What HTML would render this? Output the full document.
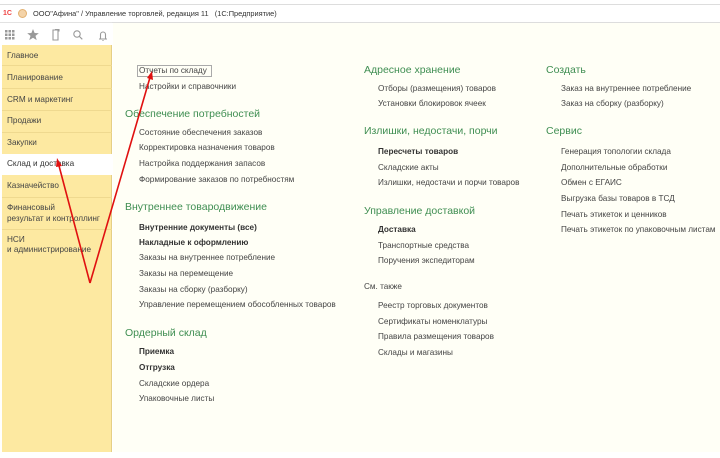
<!DOCTYPE html>
<html><head><meta charset="utf-8"><style>
*{margin:0;padding:0;box-sizing:border-box}
body{width:720px;height:458px;background:#fff;font-family:"Liberation Sans","Noto Sans CJK SC",sans-serif;position:relative;overflow:hidden;color:#444}
.a{position:absolute;white-space:nowrap;font-size:8.2px;line-height:10px}
.h{position:absolute;white-space:nowrap;font-size:10.5px;line-height:12px;color:#3f8e52}
.b{font-weight:bold;color:#333}
.s{position:absolute;white-space:nowrap;font-size:8.2px;line-height:10px;color:#444}
</style></head><body>
<div style="position:absolute;left:0;top:4px;width:720px;height:1px;background:#ddd"></div>
<div style="position:absolute;left:0;top:22px;width:720px;height:1px;background:#e2e2e2"></div>
<div style="position:absolute;left:3px;top:10px;font-size:7px;font-weight:bold;color:#e44">1С</div>
<div style="position:absolute;left:18px;top:9px;width:9px;height:9px;border-radius:50%;background:#f4d3a8;border:1px solid #e2b070"></div>
<div class="a" style="left:33px;top:9px;font-size:7.4px;color:#333">ООО"Афина" / Управление торговлей, редакция 11 &nbsp; (1С:Предприятие)</div>
<!-- toolbar icons -->
<svg style="position:absolute;left:0;top:26px" width="112" height="18">
<g fill="#999"><rect x="5" y="4" width="2.5" height="2.5"/><rect x="8.5" y="4" width="2.5" height="2.5"/><rect x="12" y="4" width="2.5" height="2.5"/><rect x="5" y="7.5" width="2.5" height="2.5"/><rect x="8.5" y="7.5" width="2.5" height="2.5"/><rect x="12" y="7.5" width="2.5" height="2.5"/><rect x="5" y="11" width="2.5" height="2.5"/><rect x="8.5" y="11" width="2.5" height="2.5"/><rect x="12" y="11" width="2.5" height="2.5"/>
<path d="M33 3l1.6 4 4.2.2-3.3 2.7 1.2 4.2-3.7-2.4-3.7 2.4 1.2-4.2-3.3-2.7 4.2-.2z"/></g>
<g fill="none" stroke="#999" stroke-width="1.1"><path d="M53 4h5v10h-5z M55 3.5h4v2"/><circle cx="77" cy="8" r="3.2"/><path d="M79.3 10.3l3 3"/><path d="M99 13h8 M100.5 12.5v-4a2.5 2.5 0 0 1 5 0v4 M103 14v1"/></g>
</svg>
<div style="position:absolute;left:112px;top:22px;width:608px;height:1px;background:#ddd"></div>
<!-- sidebar -->
<div style="position:absolute;left:2px;top:45px;width:110px;height:407px;background:#fde9a1;border-right:1px solid #e5cf86"></div>
<div style="position:absolute;left:2px;top:154px;width:110px;height:21px;background:#fff"></div>
<div style="position:absolute;left:2px;top:65px;width:110px;height:1px;background:#efd98f"></div>
<div style="position:absolute;left:2px;top:88px;width:110px;height:1px;background:#efd98f"></div>
<div style="position:absolute;left:2px;top:110px;width:110px;height:1px;background:#efd98f"></div>
<div style="position:absolute;left:2px;top:132px;width:110px;height:1px;background:#efd98f"></div>
<div style="position:absolute;left:2px;top:197px;width:110px;height:1px;background:#efd98f"></div>
<div style="position:absolute;left:2px;top:229px;width:110px;height:1px;background:#efd98f"></div>
<div class="s" style="left:7px;top:51px">Главное</div>
<div class="s" style="left:7px;top:73px">Планирование</div>
<div class="s" style="left:7px;top:95px">CRM и маркетинг</div>
<div class="s" style="left:7px;top:116px">Продажи</div>
<div class="s" style="left:7px;top:138px">Закупки</div>
<div class="s" style="left:7px;top:159px;color:#333">Склад и доставка</div>
<div class="s" style="left:7px;top:181px">Казначейство</div>
<div class="s" style="left:7px;top:203px">Финансовый</div>
<div class="s" style="left:7px;top:214px">результат и контроллинг</div>
<div class="s" style="left:7px;top:235px">НСИ</div>
<div class="s" style="left:7px;top:245px">и администрирование</div>
<!-- main -->
<div style="position:absolute;left:113px;top:23px;width:607px;height:429px;background:#fffff6"></div>
<div style="position:absolute;left:137px;top:65px;width:75px;height:12px;border:1px solid #aaa"></div>
<div class="a" style="left:139px;top:66px">Отчеты по складу</div>
<div class="a" style="left:139px;top:82px">Настройки и справочники</div>
<div class="h" style="left:125px;top:108px">Обеспечение потребностей</div>
<div class="a" style="left:139px;top:128px">Состояние обеспечения заказов</div>
<div class="a" style="left:139px;top:143px">Корректировка назначения товаров</div>
<div class="a" style="left:139px;top:159px">Настройка поддержания запасов</div>
<div class="a" style="left:139px;top:175px">Формирование заказов по потребностям</div>
<div class="h" style="left:125px;top:201px">Внутреннее товародвижение</div>
<div class="a b" style="left:139px;top:223px">Внутренние документы (все)</div>
<div class="a b" style="left:139px;top:238px">Накладные к оформлению</div>
<div class="a" style="left:139px;top:253px">Заказы на внутреннее потребление</div>
<div class="a" style="left:139px;top:269px">Заказы на перемещение</div>
<div class="a" style="left:139px;top:285px">Заказы на сборку (разборку)</div>
<div class="a" style="left:139px;top:300px">Управление перемещением обособленных товаров</div>
<div class="h" style="left:125px;top:327px">Ордерный склад</div>
<div class="a b" style="left:139px;top:347px">Приемка</div>
<div class="a b" style="left:139px;top:363px">Отгрузка</div>
<div class="a" style="left:139px;top:379px">Складские ордера</div>
<div class="a" style="left:139px;top:394px">Упаковочные листы</div>

<div class="h" style="left:364px;top:64px">Адресное хранение</div>
<div class="a" style="left:378px;top:84px">Отборы (размещения) товаров</div>
<div class="a" style="left:378px;top:99px">Установки блокировок ячеек</div>
<div class="h" style="left:364px;top:125px">Излишки, недостачи, порчи</div>
<div class="a b" style="left:378px;top:147px">Пересчеты товаров</div>
<div class="a" style="left:378px;top:163px">Складские акты</div>
<div class="a" style="left:378px;top:178px">Излишки, недостачи и порчи товаров</div>
<div class="h" style="left:364px;top:205px">Управление доставкой</div>
<div class="a b" style="left:378px;top:225px">Доставка</div>
<div class="a" style="left:378px;top:241px">Транспортные средства</div>
<div class="a" style="left:378px;top:256px">Поручения экспедиторам</div>
<div class="a" style="left:364px;top:282px">См. также</div>
<div class="a" style="left:378px;top:301px">Реестр торговых документов</div>
<div class="a" style="left:378px;top:317px">Сертификаты номенклатуры</div>
<div class="a" style="left:378px;top:332px">Правила размещения товаров</div>
<div class="a" style="left:378px;top:348px">Склады и магазины</div>

<div class="h" style="left:546px;top:64px">Создать</div>
<div class="a" style="left:561px;top:84px">Заказ на внутреннее потребление</div>
<div class="a" style="left:561px;top:99px">Заказ на сборку (разборку)</div>
<div class="h" style="left:546px;top:125px">Сервис</div>
<div class="a" style="left:561px;top:147px">Генерация топологии склада</div>
<div class="a" style="left:561px;top:163px">Дополнительные обработки</div>
<div class="a" style="left:561px;top:178px">Обмен с ЕГАИС</div>
<div class="a" style="left:561px;top:194px">Выгрузка базы товаров в ТСД</div>
<div class="a" style="left:561px;top:210px">Печать этикеток и ценников</div>
<div class="a" style="left:561px;top:225px">Печать этикеток по упаковочным листам</div>

<svg style="position:absolute;left:0;top:0" width="720" height="458">
<g stroke="#e01010" stroke-width="1.6" fill="none"><path d="M90 283L151 74"/><path d="M90 283L58 162"/></g>
<g fill="#e01010"><path d="M152 71l1 9-6-2z"/><path d="M57 158l5 8-6 1z"/></g>
</svg>
</body></html>
